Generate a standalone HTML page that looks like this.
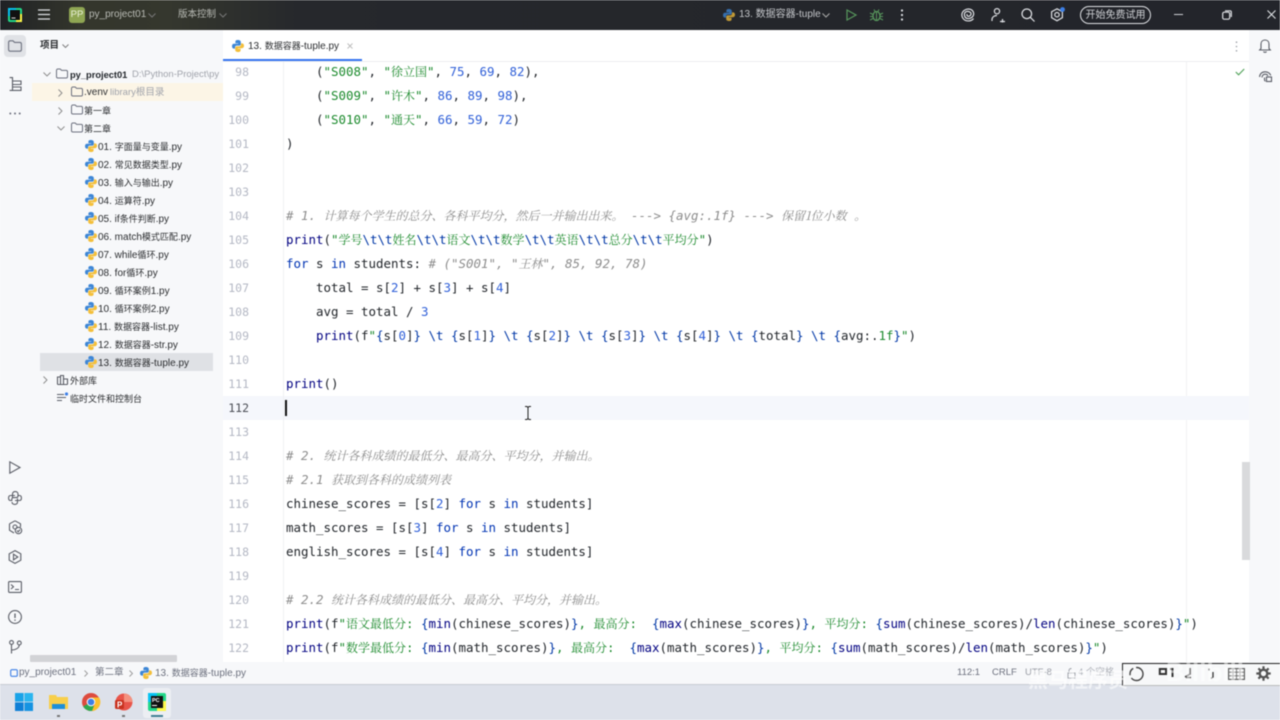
<!DOCTYPE html>
<html><head><meta charset="utf-8"><style>
html,body{margin:0;padding:0;width:1280px;height:720px;overflow:hidden;background:#fff}
#r{position:relative;width:1280px;height:720px;overflow:hidden;font-family:"Liberation Sans","Noto Sans CJK SC",sans-serif;filter:blur(.4px)}
.a{position:absolute}
.t{position:absolute;white-space:pre;line-height:20px;height:20px}
.t b{font-weight:normal;font-size:9px}
.ln{position:absolute;left:224px;width:25px;text-align:right;font:11.5px/24px "DejaVu Sans Mono",monospace;color:#b4b8c4;height:24px}
.c{position:absolute;left:286px;white-space:pre;font:12.46px/24px "DejaVu Sans Mono",monospace;color:#1f2328;height:24px}
.p{color:#000080}.k{color:#0033b3}.s{color:#1b8a2c}.n{color:#2f5fd8}.m{color:#8c8c8c;font-style:italic}.b{color:#0037a6}
.z{font:12px/24px "Noto Serif CJK SC",serif}
.m .z{font-style:italic}
.tree{font-size:10px;color:#2b2d30;margin-top:.5px}
svg{position:absolute;overflow:visible}
.ic{fill:none;stroke:#5a5d66;stroke-width:1.1}
.wh{fill:none;stroke:#dfe1e5;stroke-width:1.2}
</style></head><body><div id="r">
<svg width="0" height="0"><defs>
<g id="py"><path d="M6 0C3.6 0 3.4 1 3.4 2V3.3H6.2V3.8H2C.8 3.8 0 4.8 0 6.2S.8 8.6 2 8.6H3V7.2C3 6.2 3.9 5.6 4.8 5.6H7.4C8.2 5.6 8.8 5 8.8 4.2V2C8.8 .8 7.6 0 6 0Z" fill="#3d86d6"/><path d="M6 12C8.4 12 8.6 11 8.6 10V8.7H5.8V8.2H10C11.2 8.2 12 7.2 12 5.8S11.2 3.4 10 3.4H9V4.8C9 5.8 8.1 6.4 7.2 6.4H4.6C3.8 6.4 3.2 7 3.2 7.8V10C3.2 11.2 4.4 12 6 12Z" fill="#f4bf3a"/></g>
<g id="fo"><path d="M.5 2.5C.5 1.6 1 1 1.8 1H4.2L5.6 2.4H10.2C11 2.4 11.5 3 11.5 3.8V8.8C11.5 9.6 11 10 10.2 10H1.8C1 10 .5 9.6 .5 8.8Z" fill="none" stroke="#6c707e" stroke-width="1"/></g>
</defs></svg>

<!-- title bar -->
<div class="a" style="left:0;top:0;width:1280px;height:30px;background:linear-gradient(90deg,#1f2125 0,#34362c 80px,#35372e 170px,#26282c 300px,#23252b 100%)"></div>
<svg style="left:8px;top:8px" width="14" height="14"><rect width="14" height="14" rx="2" fill="#21d789"/><rect x="0" y="0" width="8" height="8" fill="#07c3f2"/><rect x="8" y="6" width="6" height="8" fill="#fcf84a"/><rect x="2" y="2" width="10" height="10" fill="#111"/><rect x="3.5" y="9.5" width="4" height="1" fill="#ddd"/></svg>
<svg style="left:38px;top:9px" width="13" height="12"><path d="M0 1H12M0 5.5H12M0 10H12" stroke="#dfe1e5" stroke-width="1.2"/></svg>
<div class="a" style="left:69px;top:7px;width:16px;height:16px;border-radius:3px;background:#8fa653;color:#e9efd8;font-size:9.5px;line-height:16px;text-align:center">PP</div>
<div class="t" style="left:89px;top:5px;font-size:10px;color:#b9bbb5">py_project01</div>
<svg style="left:148px;top:13px" width="8" height="5"><path d="M.5.5L4 4L7.5.5" fill="none" stroke="#777" stroke-width="1"/></svg>
<div class="t" style="left:178px;top:5px;font-size:9.5px;color:#b9bbb5">版本控制</div>
<svg style="left:219px;top:13px" width="8" height="5"><path d="M.5.5L4 4L7.5.5" fill="none" stroke="#777" stroke-width="1"/></svg>
<svg style="left:723px;top:9px" width="12" height="12" opacity=".75"><use href="#py"/></svg>
<div class="t" style="left:739px;top:5px;font-size:10px;color:#c4c6ca">13. 数据容器-tuple</div>
<svg style="left:822px;top:13px" width="8" height="5"><path d="M.5.5L4 4L7.5.5" fill="none" stroke="#aaa" stroke-width="1"/></svg>
<svg style="left:846px;top:9px" width="11" height="12"><path d="M1 1L10 6L1 11Z" fill="none" stroke="#57965c" stroke-width="1.2"/></svg>
<svg style="left:870px;top:8px" width="13" height="14"><ellipse cx="6.5" cy="8" rx="3.5" ry="4.5" fill="none" stroke="#57965c" stroke-width="1.3"/><path d="M6.5 3.5V12.5M0 5L3 6.5M13 5L10 6.5M0 12L3 10.5M13 12L10 10.5M4 1.5L5 3.5M9 1.5L8 3.5M0 8.5H3M10 8.5H13" stroke="#57965c" stroke-width="1"/></svg>
<svg style="left:900px;top:9px" width="4" height="12"><circle cx="2" cy="1.5" r="1.1" fill="#dfe1e5"/><circle cx="2" cy="6" r="1.1" fill="#dfe1e5"/><circle cx="2" cy="10.5" r="1.1" fill="#dfe1e5"/></svg>
<svg style="left:961px;top:8px" width="14" height="14"><path class="wh" d="M12.5 10.5C10.5 13.5 5 13.8 2.5 11S.4 4.2 3.5 2.2 10.8 .8 12.2 3.8 11.8 9.6 8.5 10.4 3.4 9.2 3.4 6.5 6 2.8 8.4 3.8 10.4 7 8.6 8 5.6 7.6 6 6"/></svg>
<svg style="left:991px;top:8px" width="14" height="15"><circle cx="6" cy="3.2" r="2.6" class="wh"/><path class="wh" d="M1 13V11.5C1 9 3.4 7.5 6 7.5M9 13.5H14M11.5 11V14.5" /></svg>
<svg style="left:1021px;top:8px" width="14" height="14"><circle cx="5.8" cy="5.8" r="4.8" class="wh"/><path class="wh" d="M9.3 9.3L13.5 13.5"/></svg>
<svg style="left:1050px;top:7px" width="16" height="16"><path class="wh" d="M7 1.8L12.4 4.7V10.7L7 13.8L1.6 10.7V4.7Z"/><circle cx="7" cy="7.7" r="2.2" class="wh"/><circle cx="12.5" cy="2.5" r="2.4" fill="#3d7fe6"/></svg>
<div class="a" style="left:1080px;top:6px;width:69px;height:16px;border:1px solid #dfe1e5;border-radius:9px;color:#cfd1d5;font-size:10px;line-height:17px;text-align:center">开始免费试用</div>
<div class="a" style="left:1174px;top:14px;width:9px;height:1.2px;background:#cfd1d5"></div>
<svg style="left:1222px;top:10px" width="10" height="10"><rect x=".7" y="2.2" width="7" height="7" rx="1.5" class="wh"/><path class="wh" d="M3 .8H8C8.7.8 9.3 1.4 9.3 2.1V7"/></svg>
<svg style="left:1267px;top:10px" width="9" height="9"><path d="M.5.5L8.5 8.5M8.5.5L.5 8.5" stroke="#dfe1e5" stroke-width="1.1"/></svg>

<!-- panels -->
<div class="a" style="left:0;top:30px;width:223px;height:633px;background:#f7f8fa"></div>
<div class="a" style="left:4px;top:35px;width:22px;height:22px;border-radius:4px;background:#e0e2e6"></div>
<svg style="left:8px;top:40px" width="14" height="12"><path d="M.6 2.5C.6 1.4 1.2.8 2.2.8H5L6.6 2.4H11.8C12.8 2.4 13.4 3 13.4 4V9.5C13.4 10.5 12.8 11.2 11.8 11.2H2.2C1.2 11.2 .6 10.5 .6 9.5Z" fill="none" stroke="#6c707e" stroke-width="1.1"/></svg>
<svg style="left:9px;top:77px" width="13" height="14"><path class="ic" d="M.6.6H3.5V13.4H.6M3.5 4H12V7.5H3.5M3.5 10H12V13.4H3.5"/></svg>
<svg style="left:9px;top:112px" width="12" height="3"><circle cx="1.3" cy="1.5" r="1" fill="#6c707e"/><circle cx="6" cy="1.5" r="1" fill="#6c707e"/><circle cx="10.7" cy="1.5" r="1" fill="#6c707e"/></svg>
<svg style="left:9px;top:461px" width="12" height="13"><path class="ic" d="M.8.8L11 6.5L.8 12.2Z"/></svg>
<svg style="left:8px;top:491px" width="14" height="14"><path class="ic" d="M4.5 6.5V3C4.5 1.4 5.8.6 7.2.6S10 1.4 10 3V5C10 6 9.4 6.6 8.4 6.6H5.5C4.5 6.6 3.8 7.2 3.8 8.2V9.5H2.5C1.2 9.5.6 8.4.6 7S1.2 4.5 2.5 4.5H7M9.5 7.5V11C9.5 12.6 8.2 13.4 6.8 13.4S4 12.6 4 11M10 4.5H11.5C12.8 4.5 13.4 5.6 13.4 7S12.8 9.5 11.5 9.5H7"/></svg>
<svg style="left:8px;top:520px" width="15" height="15"><path class="ic" d="M7 .8L12.5 3.8V7M1.5 3.8V10.2L6 13M1.5 3.8L7 .8"/><circle cx="7" cy="7" r="2" class="ic"/><circle cx="10.5" cy="10.5" r="3.2" class="ic"/><path class="ic" d="M9 10.5L10.2 11.8L12 9.6"/></svg>
<svg style="left:8px;top:550px" width="14" height="14"><path class="ic" d="M7 .6L12.8 3.8V10.2L7 13.4L1.2 10.2V3.8Z"/><path class="ic" d="M5.5 4.2L9.8 7L5.5 9.8Z"/></svg>
<svg style="left:8px;top:581px" width="14" height="12"><rect x=".6" y=".6" width="12.8" height="10.8" rx="1" class="ic"/><path class="ic" d="M3 3.5L5.5 5.8L3 8M7 8.5H11"/></svg>
<svg style="left:8px;top:610px" width="14" height="14"><circle cx="7" cy="7" r="6.4" class="ic"/><path d="M7 3.5V8M7 9.5V10.8" stroke="#5a5d66" stroke-width="1.3"/></svg>
<svg style="left:9px;top:640px" width="13" height="14"><circle cx="2.5" cy="2.5" r="1.9" class="ic"/><circle cx="10.3" cy="3" r="1.9" class="ic"/><path class="ic" d="M2.5 4.5V13.5M2.5 10C6 10 10 8.5 10.3 5"/></svg>

<div class="t" style="left:40px;top:36px;font-size:9.5px;font-weight:bold;color:#2b2d30">项目</div>
<svg style="left:62px;top:44px" width="7" height="4"><path d="M.5.5L3.5 3.5L6.5.5" fill="none" stroke="#777" stroke-width=".9"/></svg>

<div class="a" style="left:32px;top:83px;width:191px;height:18px;background:#fcf5e6"></div>
<div class="a" style="left:40px;top:353px;width:173px;height:18px;background:#dfe1e5"></div>

<svg style="left:43px;top:72px" width="8" height="5"><path d="M.5.5L4 4L7.5.5" fill="none" stroke="#888" stroke-width=".9"/></svg>
<svg style="left:56px;top:68px" width="12" height="11"><use href="#fo"/></svg>
<div class="t" style="left:70px;top:64.5px;font-size:9.3px;font-weight:bold;color:#1f2328">py_project01</div>
<div class="t" style="left:132px;top:64.5px;width:91px;overflow:hidden;font-size:9.5px;color:#a0a3ab">D:\Python-Project\py</div>
<svg style="left:58px;top:89px" width="5" height="8"><path d="M.5.5L4 4L.5 7.5" fill="none" stroke="#888" stroke-width=".9"/></svg>
<svg style="left:71px;top:86px" width="12" height="11"><use href="#fo"/></svg>
<div class="t tree" style="left:84px;top:82px">.venv</div>
<div class="t" style="left:110px;top:82.5px;font-size:9.5px;color:#a0a3ab">library根目录</div>
<svg style="left:58px;top:107px" width="5" height="8"><path d="M.5.5L4 4L.5 7.5" fill="none" stroke="#888" stroke-width=".9"/></svg>
<svg style="left:71px;top:104px" width="12" height="11"><use href="#fo"/></svg>
<div class="t tree" style="left:84px;top:100px"><b>第一章</b></div>
<svg style="left:57px;top:126px" width="8" height="5"><path d="M.5.5L4 4L7.5.5" fill="none" stroke="#888" stroke-width=".9"/></svg>
<svg style="left:71px;top:122px" width="12" height="11"><use href="#fo"/></svg>
<div class="t tree" style="left:84px;top:118px"><b>第二章</b></div>

<svg style="left:85px;top:140px" width="12" height="12"><use href="#py"/></svg><div class="t tree" style="left:98px;top:136px">01. <b>字面量与变量</b>.py</div>
<svg style="left:85px;top:158px" width="12" height="12"><use href="#py"/></svg><div class="t tree" style="left:98px;top:154px">02. <b>常见数据类型</b>.py</div>
<svg style="left:85px;top:176px" width="12" height="12"><use href="#py"/></svg><div class="t tree" style="left:98px;top:172px">03. <b>输入与输出</b>.py</div>
<svg style="left:85px;top:194px" width="12" height="12"><use href="#py"/></svg><div class="t tree" style="left:98px;top:190px">04. <b>运算符</b>.py</div>
<svg style="left:85px;top:212px" width="12" height="12"><use href="#py"/></svg><div class="t tree" style="left:98px;top:208px">05. if<b>条件判断</b>.py</div>
<svg style="left:85px;top:230px" width="12" height="12"><use href="#py"/></svg><div class="t tree" style="left:98px;top:226px">06. match<b>模式匹配</b>.py</div>
<svg style="left:85px;top:248px" width="12" height="12"><use href="#py"/></svg><div class="t tree" style="left:98px;top:244px">07. while<b>循环</b>.py</div>
<svg style="left:85px;top:266px" width="12" height="12"><use href="#py"/></svg><div class="t tree" style="left:98px;top:262px">08. for<b>循环</b>.py</div>
<svg style="left:85px;top:284px" width="12" height="12"><use href="#py"/></svg><div class="t tree" style="left:98px;top:280px">09. <b>循环案例</b>1.py</div>
<svg style="left:85px;top:302px" width="12" height="12"><use href="#py"/></svg><div class="t tree" style="left:98px;top:298px">10. <b>循环案例</b>2.py</div>
<svg style="left:85px;top:320px" width="12" height="12"><use href="#py"/></svg><div class="t tree" style="left:98px;top:316px">11. <b>数据容器</b>-list.py</div>
<svg style="left:85px;top:338px" width="12" height="12"><use href="#py"/></svg><div class="t tree" style="left:98px;top:334px">12. <b>数据容器</b>-str.py</div>
<svg style="left:85px;top:356px" width="12" height="12"><use href="#py"/></svg><div class="t tree" style="left:98px;top:352px">13. <b>数据容器</b>-tuple.py</div>
<svg style="left:43px;top:376px" width="5" height="8"><path d="M.5.5L4 4L.5 7.5" fill="none" stroke="#888" stroke-width=".9"/></svg>
<svg style="left:57px;top:375px" width="11" height="10"><path class="ic" d="M.5 9.5V2H3.5V9.5M3.5 9.5V.5H6.5V9.5M6.5 9.5V4H10.5V9.5M.5 9.5H10.5"/></svg>
<div class="t tree" style="left:70px;top:370px"><b>外部库</b></div>
<svg style="left:57px;top:392px" width="12" height="11"><path class="ic" d="M0 2.5H7M0 5.5H9M0 8.5H5"/><circle cx="9.5" cy="2" r="1.6" fill="#3d7fe6"/></svg>
<div class="t tree" style="left:70px;top:388px"><b>临时文件和控制台</b></div>
<div class="a" style="left:30px;top:655px;width:147px;height:7px;background:#d2d3d6;border-radius:1px"></div>

<!-- tab bar -->
<svg style="left:232px;top:40px" width="12" height="12"><use href="#py"/></svg>
<div class="t" style="left:248px;top:36px;font-size:10px;color:#2b2d30">13. <b>数据容器</b>-tuple.py</div>
<svg style="left:347px;top:43px" width="6" height="6"><path d="M.5.5L5.5 5.5M5.5.5L.5 5.5" stroke="#bbb" stroke-width=".9"/></svg>
<div class="a" style="left:223px;top:59px;width:139px;height:2.5px;background:#3574f0"></div>
<div class="a" style="left:223px;top:61px;width:1026px;height:1px;background:#ecedf0"></div>
<svg style="left:1235px;top:41px" width="3" height="11"><circle cx="1.5" cy="1.2" r=".8" fill="#9a9da5"/><circle cx="1.5" cy="5.5" r=".8" fill="#9a9da5"/><circle cx="1.5" cy="9.8" r=".8" fill="#9a9da5"/></svg>

<!-- right strip -->
<div class="a" style="left:1249px;top:30px;width:31px;height:633px;background:#f7f8fa"></div>
<div class="a" style="left:1186px;top:62px;width:1px;height:601px;background:#f1f2f4"></div>
<svg style="left:1259px;top:39px" width="12" height="14"><path class="ic" d="M2 9.5V5C2 2.6 3.6 1 6 1S10 2.6 10 5V9.5L11.3 11H.7ZM4.5 12.5C5 13.6 7 13.6 7.5 12.5"/></svg>
<svg style="left:1259px;top:71px" width="13" height="12"><path class="ic" d="M.6 6C.6 3 3 .8 6 .8S11.4 2.5 11.6 4.5M3 6.5C3 4.6 4.4 3.2 6 3.2S8.6 4 8.9 5M5.5 6.5V8.5C5.5 9.5 6 10 6.5 10"/><rect x="7.5" y="6" width="5" height="4.5" class="ic"/></svg>
<svg style="left:1235px;top:68px" width="10" height="8"><path d="M.8 4L3.6 6.8L9.2 1" fill="none" stroke="#57a55f" stroke-width="1.2"/></svg>
<div class="a" style="left:1242px;top:462px;width:8px;height:98px;background:#d9dadc"></div>

<!-- current line & gutter -->
<div class="a" style="left:223px;top:396px;width:1026px;height:24px;background:#f5f7fc"></div>
<div class="a" style="left:283px;top:62px;width:1px;height:601px;background:#f0f1f3"></div>

<div class="ln" style="top:60px">98</div><div class="ln" style="top:84px">99</div><div class="ln" style="top:108px">100</div><div class="ln" style="top:132px">101</div><div class="ln" style="top:156px">102</div><div class="ln" style="top:180px">103</div><div class="ln" style="top:204px">104</div><div class="ln" style="top:228px">105</div><div class="ln" style="top:252px">106</div><div class="ln" style="top:276px">107</div><div class="ln" style="top:300px">108</div><div class="ln" style="top:324px">109</div><div class="ln" style="top:348px">110</div><div class="ln" style="top:372px">111</div><div class="ln" style="top:396px;color:#4a4d55">112</div><div class="ln" style="top:420px">113</div><div class="ln" style="top:444px">114</div><div class="ln" style="top:468px">115</div><div class="ln" style="top:492px">116</div><div class="ln" style="top:516px">117</div><div class="ln" style="top:540px">118</div><div class="ln" style="top:564px">119</div><div class="ln" style="top:588px">120</div><div class="ln" style="top:612px">121</div><div class="ln" style="top:636px">122</div>

<div class="c" style="top:60px">    (<span class="s">"S008"</span>, <span class="s">"<span class="z">徐立国</span>"</span>, <span class="n">75</span>, <span class="n">69</span>, <span class="n">82</span>),</div>
<div class="c" style="top:84px">    (<span class="s">"S009"</span>, <span class="s">"<span class="z">许木</span>"</span>, <span class="n">86</span>, <span class="n">89</span>, <span class="n">98</span>),</div>
<div class="c" style="top:108px">    (<span class="s">"S010"</span>, <span class="s">"<span class="z">通天</span>"</span>, <span class="n">66</span>, <span class="n">59</span>, <span class="n">72</span>)</div>
<div class="c" style="top:132px">)</div>
<div class="c m" style="top:204px"># 1. <span class="z">计算每个学生的总分、各科平均分，然后一并输出出来。</span> ---&gt; {avg:.1f} ---&gt; <span class="z">保留1位小数</span> <span class="z">。</span></div>
<div class="c" style="top:228px"><span class="p">print</span>(<span class="s">"<span class="z">学号</span><span class="b">\t\t</span><span class="z">姓名</span><span class="b">\t\t</span><span class="z">语文</span><span class="b">\t\t</span><span class="z">数学</span><span class="b">\t\t</span><span class="z">英语</span><span class="b">\t\t</span><span class="z">总分</span><span class="b">\t\t</span><span class="z">平均分</span>"</span>)</div>
<div class="c" style="top:252px"><span class="k">for</span> s <span class="k">in</span> students: <span class="m"># ("S001", "<span class="z">王林</span>", 85, 92, 78)</span></div>
<div class="c" style="top:276px">    total = s[<span class="n">2</span>] + s[<span class="n">3</span>] + s[<span class="n">4</span>]</div>
<div class="c" style="top:300px">    avg = total / <span class="n">3</span></div>
<div class="c" style="top:324px">    <span class="p">print</span>(f<span class="s">"</span><span class="b">{</span>s[<span class="n">0</span>]<span class="b">}</span> <span class="b">\t</span> <span class="b">{</span>s[<span class="n">1</span>]<span class="b">}</span> <span class="b">\t</span> <span class="b">{</span>s[<span class="n">2</span>]<span class="b">}</span> <span class="b">\t</span> <span class="b">{</span>s[<span class="n">3</span>]<span class="b">}</span> <span class="b">\t</span> <span class="b">{</span>s[<span class="n">4</span>]<span class="b">}</span> <span class="b">\t</span> <span class="b">{</span>total<span class="b">}</span> <span class="b">\t</span> <span class="b">{</span>avg:.<span class="s">1f</span><span class="b">}</span><span class="s">"</span>)</div>
<div class="c" style="top:372px"><span class="p">print</span>()</div>
<div class="a" style="left:285px;top:400px;width:2px;height:16px;background:#111"></div>
<div class="c m" style="top:444px"># 2. <span class="z">统计各科成绩的最低分、最高分、平均分，并输出。</span></div>
<div class="c m" style="top:468px"># 2.1 <span class="z">获取到各科的成绩列表</span></div>
<div class="c" style="top:492px">chinese_scores = [s[<span class="n">2</span>] <span class="k">for</span> s <span class="k">in</span> students]</div>
<div class="c" style="top:516px">math_scores = [s[<span class="n">3</span>] <span class="k">for</span> s <span class="k">in</span> students]</div>
<div class="c" style="top:540px">english_scores = [s[<span class="n">4</span>] <span class="k">for</span> s <span class="k">in</span> students]</div>
<div class="c m" style="top:588px"># 2.2 <span class="z">统计各科成绩的最低分、最高分、平均分，并输出。</span></div>
<div class="c" style="top:612px"><span class="p">print</span>(f<span class="s">"<span class="z">语文最低分</span>: </span><span class="b">{</span><span class="p">min</span>(chinese_scores)<span class="b">}</span><span class="s">, <span class="z">最高分</span>:  </span><span class="b">{</span><span class="p">max</span>(chinese_scores)<span class="b">}</span><span class="s">, <span class="z">平均分</span>: </span><span class="b">{</span><span class="p">sum</span>(chinese_scores)/<span class="p">len</span>(chinese_scores)<span class="b">}</span><span class="s">"</span>)</div>
<div class="c" style="top:636px"><span class="p">print</span>(f<span class="s">"<span class="z">数学最低分</span>: </span><span class="b">{</span><span class="p">min</span>(math_scores)<span class="b">}</span><span class="s">, <span class="z">最高分</span>:  </span><span class="b">{</span><span class="p">max</span>(math_scores)<span class="b">}</span><span class="s">, <span class="z">平均分</span>: </span><span class="b">{</span><span class="p">sum</span>(math_scores)/<span class="p">len</span>(math_scores)<span class="b">}</span><span class="s">"</span>)</div>

<!-- I-beam -->
<svg style="left:524px;top:406px" width="8" height="14"><path d="M1 .5H3L4 1.5L5 .5H7M4 1.5V12.5M1 13.5H3L4 12.5L5 13.5H7" fill="none" stroke="#222" stroke-width="1"/></svg>

<!-- status bar -->
<div class="a" style="left:0;top:662px;width:1280px;height:22px;background:#f7f8fa;border-bottom:1px solid #c9ccd3"></div>
<svg style="left:10px;top:669px" width="8" height="8"><rect x=".7" y=".7" width="6.6" height="6.6" rx="1.2" fill="none" stroke="#3d7fe6" stroke-width="1.1"/></svg>
<div class="t" style="left:19px;top:663px;font-size:10px;color:#6c707e">py_project01</div>
<svg style="left:84px;top:670px" width="5" height="7"><path d="M.5.5L3.5 3.5L.5 6.5" fill="none" stroke="#999" stroke-width=".9"/></svg>
<div class="t" style="left:95px;top:663px;font-size:9.5px;color:#6c707e">第二章</div>
<svg style="left:129px;top:670px" width="5" height="7"><path d="M.5.5L3.5 3.5L.5 6.5" fill="none" stroke="#999" stroke-width=".9"/></svg>
<svg style="left:140px;top:667px" width="12" height="12"><use href="#py"/></svg>
<div class="t" style="left:155px;top:663px;font-size:10px;color:#6c707e">13. <b>数据容器</b>-tuple.py</div>
<div class="t" style="left:957px;top:663px;font-size:9.5px;color:#6c707e">112:1</div>
<div class="t" style="left:992px;top:663px;font-size:9.5px;color:#6c707e">CRLF</div>
<div class="t" style="left:1025px;top:663px;font-size:9.5px;color:#9a9da5">UTF-8</div>
<svg style="left:1067px;top:668px" width="9" height="11"><path d="M2 4V2.5C2 1.2 3 .5 4.5 .5M1 5H8V10H1Z" fill="none" stroke="#9a9da5" stroke-width=".9"/></svg>
<div class="t" style="left:1078px;top:663px;font-size:9.5px;color:#b0b3ba">4 个空格</div>

<!-- taskbar -->
<div class="a" style="left:0;top:685px;width:1280px;height:35px;background:#dde1ea"></div>
<div class="a" style="left:143px;top:688px;width:28px;height:30px;background:#eceef3;border-radius:3px"></div>
<svg style="left:15px;top:693px" width="18" height="18"><rect width="8.6" height="8.6" fill="#1aa3e8"/><rect x="9.4" width="8.6" height="8.6" fill="#2ab5ef"/><rect y="9.4" width="8.6" height="8.6" fill="#0f7fd6"/><rect x="9.4" y="9.4" width="8.6" height="8.6" fill="#1593e2"/></svg>
<svg style="left:49px;top:693px" width="19" height="17"><path d="M0 2H7L8 4H19V16H0Z" fill="#f8cf4a"/><rect x="3" y="11" width="13" height="5" fill="#1d8fd8"/></svg>
<svg style="left:82px;top:693px" width="18" height="18"><circle cx="9" cy="9" r="9" fill="#dd4b3e"/><path d="M9 9L1.2 13.5A9 9 0 0 0 13.5 16.8Z" fill="#2da94f"/><path d="M9 4.5H17.2A9 9 0 0 1 10 18L13.5 9Z" fill="#fbc02d"/><circle cx="9" cy="9" r="4.3" fill="#fff"/><circle cx="9" cy="9" r="3.3" fill="#3d7fe6"/></svg>
<svg style="left:114px;top:693px" width="19" height="18"><circle cx="10" cy="9" r="8.5" fill="#e8554a"/><path d="M10 .5A8.5 8.5 0 0 1 18.5 9H10Z" fill="#f4917f"/><rect x="1" y="7" width="9" height="9" rx="1.5" fill="#c8321f"/><text x="3" y="14.5" font-size="8" font-weight="bold" fill="#fff" font-family="Liberation Sans">P</text></svg>
<svg style="left:148px;top:693px" width="18" height="18"><rect width="18" height="18" rx="2" fill="#21d789"/><rect width="9" height="9" fill="#07c3f2"/><rect x="9" y="8" width="9" height="10" fill="#fcf84a"/><rect x="3" y="3" width="12" height="12" fill="#111"/><text x="4" y="9" font-size="5.5" font-weight="bold" fill="#fff" font-family="Liberation Sans">PC</text><rect x="4" y="12" width="5" height="1" fill="#fff"/></svg>
<div class="a" style="left:151px;top:715px;width:12px;height:2px;background:#3f7f93"></div>
<div class="a" style="left:57px;top:715px;width:3px;height:1.5px;background:#777"></div>
<div class="a" style="left:122px;top:715px;width:3px;height:1.5px;background:#777"></div>

<!-- IME toolbar -->
<div class="a" style="left:1122px;top:663px;width:157px;height:21px;background:#f7f8f9;border-left:1px solid #222;border-top:1px solid #222;border-bottom:1px solid #bbb"></div>
<svg style="left:1128px;top:666px" width="17" height="16"><circle cx="8.5" cy="8" r="6.5" fill="none" stroke="#444" stroke-width="1.4" stroke-dasharray="16 3 8 3"/></svg>
<svg style="left:1159px;top:668px" width="16" height="11"><path d="M.8 1H7V6H.8ZM11 1H13.5V9" fill="none" stroke="#333" stroke-width="2"/></svg>
<svg style="left:1184px;top:668px" width="10" height="11"><path d="M6 0V6L1 9M2 9.5H7" fill="none" stroke="#444" stroke-width="1.6"/></svg>
<svg style="left:1208px;top:668px" width="6" height="11"><path d="M1 .5V2.5M5 4V9L3 10.5" fill="none" stroke="#333" stroke-width="1.3"/></svg>
<svg style="left:1228px;top:668px" width="17" height="12"><rect x=".6" y=".6" width="15.8" height="10.8" fill="none" stroke="#555" stroke-width="1.1"/><path d="M.6 4.2H16.4M.6 7.8H16.4M5 .6V11.4M8.5 .6V11.4M12 .6V11.4" stroke="#666" stroke-width=".8"/></svg>
<svg style="left:1256px;top:666px" width="15" height="15"><circle cx="7.5" cy="7.5" r="3.8" fill="none" stroke="#555" stroke-width="2.4"/><path d="M7.5 .3V3M7.5 12V14.7M.3 7.5H3M12 7.5H14.7M2.4 2.4L4.3 4.3M10.7 10.7L12.6 12.6M2.4 12.6L4.3 10.7M10.7 4.3L12.6 2.4" stroke="#555" stroke-width="2.2"/></svg>

<!-- watermark -->
<div class="t" style="left:1028px;top:669px;font-size:20px;line-height:24px;height:24px;font-weight:bold;color:rgba(255,255,255,.6)">黑马程序员</div>
<div class="t" style="left:1166px;top:654px;font-size:26px;line-height:36px;height:36px;font-weight:bold;color:rgba(255,255,255,.5)">Bilibili</div>
</div></body></html>
